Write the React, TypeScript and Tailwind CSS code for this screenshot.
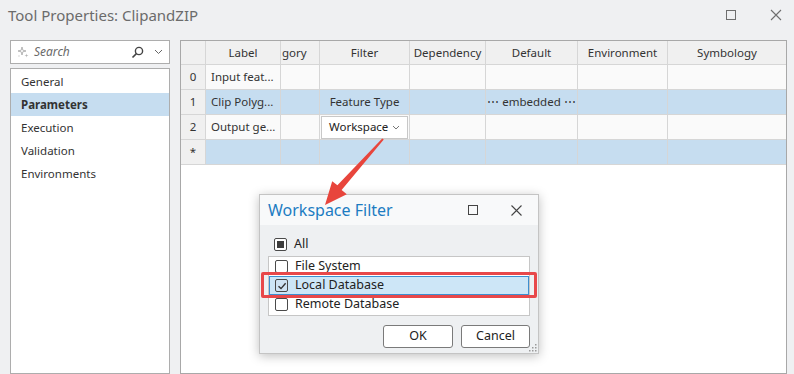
import React from "react";

const font = { fontFamily: '"Noto Sans", "Open Sans", Arial, sans-serif' };

function Check({ state }: { state: "none" | "checked" | "mixed" }) {
  return (
    <span
      className={`flex h-[13px] w-[13px] shrink-0 items-center justify-center rounded-[2px] border border-[#4a4a4a] ${
        state === "checked" ? "bg-[#cfe3f3]" : "bg-white"
      }`}
    >
      {state === "mixed" && <span className="h-[7px] w-[7px] bg-[#3c3c3c]" />}
      {state === "checked" && (
        <svg width="10" height="10" viewBox="0 0 10 10">
          <path d="M1.5 5.2 L4 7.6 L8.6 2.2" fill="none" stroke="#333" strokeWidth="1.4" />
        </svg>
      )}
    </span>
  );
}

const cols = "grid-cols-[25px_75px_39px_90px_76px_92px_90px_1fr]";

function Cell({
  children,
  className = "",
}: {
  children?: React.ReactNode;
  className?: string;
}) {
  return (
    <div
      className={`flex items-center overflow-hidden whitespace-nowrap border-r border-b border-[#d6d6d6] text-[11.5px] text-[#333] ${className}`}
    >
      {children}
    </div>
  );
}

export default function App() {
  const blue = "bg-[#c6ddf0]";
  const white = "bg-[#fafafa]";
  const idx = "bg-[#f0f0f0] justify-center";
  return (
    <div
      className="relative h-[374px] w-[794px] overflow-hidden bg-[#eff0f2]"
      style={font}
    >
      {/* Title bar */}
      <div className="flex h-[30px] items-center pl-[8px]">
        <span className="text-[15px] text-[#6b6b6b]">Tool Properties: ClipandZIP</span>
        <div className="ml-auto flex items-center gap-[34px] pr-[12px]">
          <span className="h-[10px] w-[10px] border border-[#6e6e6e]" />
          <svg width="12" height="12" viewBox="0 0 12 12">
            <path d="M1 1 L11 11 M11 1 L1 11" stroke="#6e6e6e" strokeWidth="1.1" />
          </svg>
        </div>
      </div>

      <div className="mt-[10px] flex h-[334px] pl-[10px]">
        {/* Left column */}
        <div className="flex w-[160px] flex-col gap-[4px]">
          <div className="flex h-[24px] items-center border border-[#adadad] bg-white pl-[6px] pr-[6px]">
            <svg width="12" height="12" viewBox="0 0 12 12">
              <path d="M5 1 L5.8 4.2 L9 5 L5.8 5.8 L5 9 L4.2 5.8 L1 5 L4.2 4.2 Z" fill="none" stroke="#9a9a9a" strokeWidth="0.7" />
              <path d="M9.5 7.5 L9.9 9.1 L11.5 9.5 L9.9 9.9 L9.5 11.5 L9.1 9.9 L7.5 9.5 L9.1 9.1 Z" fill="#b5b5b5" />
              <path d="M2 9 L2.3 9.7 L3 10 L2.3 10.3 L2 11 L1.7 10.3 L1 10 L1.7 9.7 Z" fill="#b5b5b5" />
            </svg>
            <span className="ml-[5px] text-[12px] italic text-[#6a6a6a]">Search</span>
            <svg className="ml-auto" width="13" height="13" viewBox="0 0 13 13">
              <circle cx="8" cy="5" r="3.6" fill="none" stroke="#444" strokeWidth="1.4" />
              <path d="M5.4 7.6 L1.5 11.5" stroke="#444" strokeWidth="1.6" />
            </svg>
            <svg className="ml-[10px]" width="9" height="6" viewBox="0 0 9 6">
              <path d="M1 1 L4.5 4.5 L8 1" fill="none" stroke="#666" strokeWidth="1" />
            </svg>
          </div>
          <div className="flex flex-1 flex-col border border-[#adadad] bg-white pt-[1px]">
            {["General", "Parameters", "Execution", "Validation", "Environments"].map((t) => (
              <div
                key={t}
                className={`flex h-[23px] items-center pl-[10px] text-[11.5px] ${
                  t === "Parameters" ? "bg-[#c6ddf0] font-bold text-[#333]" : "text-[#333]"
                }`}
              >
                {t}
              </div>
            ))}
          </div>
        </div>

        {/* Grid */}
        <div className="ml-[10px] flex w-[607px] flex-col border border-[#a8a8a8] bg-white">
          <div className={`grid ${cols} h-[24px] bg-[#f0f0f0]`}>
            <Cell />
            <Cell className="justify-center">Label</Cell>
            <Cell className="pl-[1px]">gory</Cell>
            <Cell className="justify-center">Filter</Cell>
            <Cell className="justify-center">Dependency</Cell>
            <Cell className="justify-center">Default</Cell>
            <Cell className="justify-center">Environment</Cell>
            <Cell className="justify-center border-r-0">Symbology</Cell>
          </div>
          <div className={`grid ${cols} h-[25px]`}>
            <Cell className={idx}>0</Cell>
            <Cell className={`${white} pl-[5px]`}>Input feat...</Cell>
            <Cell className={white} />
            <Cell className={white} />
            <Cell className={white} />
            <Cell className={white} />
            <Cell className={white} />
            <Cell className={`${white} border-r-0`} />
          </div>
          <div className={`grid ${cols} h-[25px]`}>
            <Cell className={idx}>1</Cell>
            <Cell className={`${blue} pl-[5px]`}>Clip Polyg...</Cell>
            <Cell className={blue} />
            <Cell className={`${blue} justify-center`}>Feature Type</Cell>
            <Cell className={blue} />
            <Cell className={`${blue} justify-center`}>⋯ embedded ⋯</Cell>
            <Cell className={blue} />
            <Cell className={`${blue} border-r-0`} />
          </div>
          <div className={`grid ${cols} h-[25px]`}>
            <Cell className={idx}>2</Cell>
            <Cell className={`${white} pl-[5px]`}>Output ge...</Cell>
            <Cell className={white} />
            <Cell className={`${white} px-[1px]`}>
              <div className="flex h-[23px] w-full items-center border border-[#c8c8c8] bg-white pl-[7px] pr-[7px] text-[11.5px] text-[#222]">
                Workspace
                <svg className="ml-auto" width="8" height="5" viewBox="0 0 8 5">
                  <path d="M1 1 L4 4 L7 1" fill="none" stroke="#777" strokeWidth="1" />
                </svg>
              </div>
            </Cell>
            <Cell className={white} />
            <Cell className={white} />
            <Cell className={white} />
            <Cell className={`${white} border-r-0`} />
          </div>
          <div className={`grid ${cols} h-[25px]`}>
            <Cell className={idx}>*</Cell>
            <Cell className={blue} />
            <Cell className={blue} />
            <Cell className={blue} />
            <Cell className={blue} />
            <Cell className={blue} />
            <Cell className={blue} />
            <Cell className={`${blue} border-r-0`} />
          </div>
        </div>
      </div>

      {/* Workspace Filter dialog */}
      <div className="absolute left-[259px] top-[194px] flex h-[160px] w-[280px] flex-col border border-[#c4c4c4] bg-[#eef0f2] shadow-[0_2px_10px_rgba(0,0,0,0.25)]">
        <div className="flex h-[30px] items-center bg-[#f8f9fa] pl-[8px] pr-[16px]">
          <span className="text-[16px] text-[#1c7cc2]">Workspace Filter</span>
          <div className="ml-auto flex items-center gap-[33px]">
            <span className="h-[10px] w-[10px] border border-[#444]" />
            <svg width="11" height="11" viewBox="0 0 11 11">
              <path d="M0.5 0.5 L10.5 10.5 M10.5 0.5 L0.5 10.5" stroke="#444" strokeWidth="1.1" />
            </svg>
          </div>
        </div>
        <div className="flex flex-col px-[8px] pt-[13px]">
          <div className="flex h-[13px] items-center gap-[7px] pl-[6px] text-[12.5px] text-[#222]">
            <Check state="mixed" />
            All
          </div>
          <div className="mt-[5px] flex flex-col border border-[#c6c6c6] bg-white pb-[1px]">
            <div className="flex h-[19px] items-center gap-[7px] pl-[6px] text-[12.5px] text-[#222]">
              <Check state="none" />
              File System
            </div>
            <div className="flex h-[19px] items-center gap-[7px] border border-[#3d8fd0] bg-[#cde6f7] pl-[5px] text-[12.5px] text-[#222]">
              <Check state="checked" />
              Local Database
            </div>
            <div className="flex h-[19px] items-center gap-[7px] pl-[6px] text-[12.5px] text-[#222]">
              <Check state="none" />
              Remote Database
            </div>
          </div>
          <div className="mt-[9px] flex justify-end gap-[8px]">
            <button className="flex h-[23px] w-[70px] items-center justify-center rounded-[3px] border border-[#7a7a7a] bg-white text-[12.5px] text-[#222]">
              OK
            </button>
            <button className="flex h-[23px] w-[69px] items-center justify-center rounded-[3px] border border-[#7a7a7a] bg-white text-[12.5px] text-[#222]">
              Cancel
            </button>
          </div>
        </div>
        <svg className="absolute bottom-[1px] right-[1px]" width="8" height="8" viewBox="0 0 8 8">
          <rect x="6" y="0" width="1.5" height="1.5" fill="#9a9a9a" />
          <rect x="3" y="3" width="1.5" height="1.5" fill="#9a9a9a" />
          <rect x="6" y="3" width="1.5" height="1.5" fill="#9a9a9a" />
          <rect x="0" y="6" width="1.5" height="1.5" fill="#9a9a9a" />
          <rect x="3" y="6" width="1.5" height="1.5" fill="#9a9a9a" />
          <rect x="6" y="6" width="1.5" height="1.5" fill="#9a9a9a" />
        </svg>
      </div>

      {/* Red highlight box */}
      <div className="pointer-events-none absolute left-[261px] top-[272px] h-[26px] w-[276px] rounded-[2px] border-[3px] border-[#e8484a]" />

      {/* Red arrow */}
      <svg className="pointer-events-none absolute left-0 top-0" width="794" height="374" viewBox="0 0 794 374">
        <polygon
          points="383.8,139.6 382.2,138.4 337.4,185.2 332.2,181.2 325,205 346.8,194.2 341.6,190"
          fill="#e8453c"
        />
      </svg>
    </div>
  );
}
